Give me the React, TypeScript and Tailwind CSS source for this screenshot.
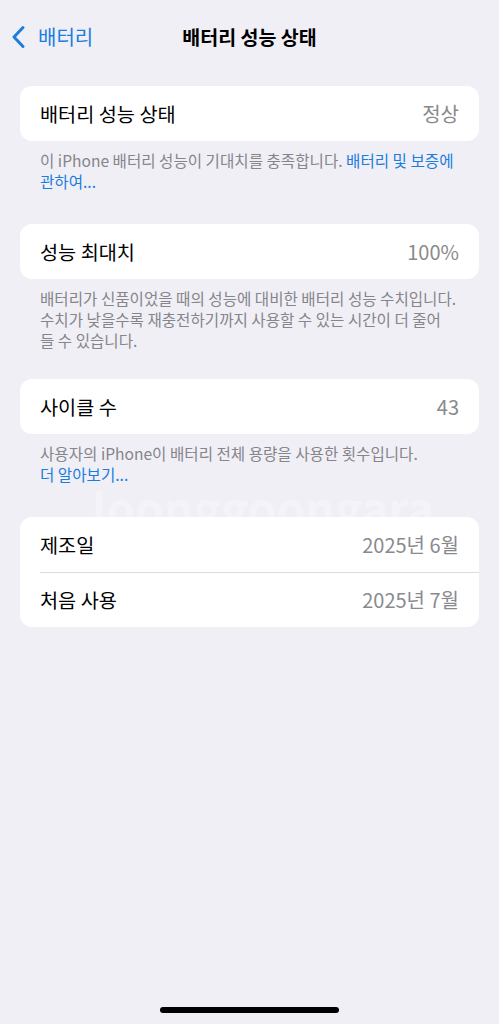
import React from 'react';

const font = { fontFamily: '"Noto Sans CJK KR", "Noto Sans", sans-serif' };

type Row = { label: string; value: string };

const Card: React.FC<{ rows: Row[] }> = ({ rows }) => (
    <div className="relative z-10 mx-5 rounded-xl bg-white">
        {rows.map((r, i) => (
            <div key={r.label} className="flex">
                <div className={`ml-5 flex h-[55px] flex-1 items-center justify-between pr-5 ${i > 0 ? 'border-t border-[#dcdce0]' : ''}`}>
                    <span className="text-[19.7px] text-black">{r.label}</span>
                    <span className="text-[20px] text-[#8a8a8e]">{r.value}</span>
                </div>
            </div>
        ))}
    </div>
);

const Footer: React.FC<{ children: React.ReactNode }> = ({ children }) => (
    <p className="relative z-10 ml-10 mt-[9px] whitespace-nowrap text-[15.6px] leading-[21px] text-[#85858a]">{children}</p>
);

export default function App() {
    return (
        <div style={font} className="relative flex h-[1024px] w-full flex-col overflow-hidden bg-[#f0eff6]">
            {/* faint watermark, sits behind the cards */}
            <div className="pointer-events-none absolute left-[92px] top-[484px] z-0 text-[46px] font-semibold leading-none text-white/30">
                loonggoongara
            </div>

            {/* nav bar */}
            <div className="relative flex h-[74px] items-center justify-center">
                <div className="absolute left-[11px] top-[25px] flex items-center gap-[12px] text-[#1b7ddc]">
                    <svg width="15" height="24" viewBox="0 0 15 24" fill="none">
                        <path d="M12 2.5 L3 12 L12 21.5" stroke="currentColor" strokeWidth="3" strokeLinecap="round" strokeLinejoin="round" />
                    </svg>
                    <span className="text-[20px] leading-none">배터리</span>
                </div>
                <h1 className="text-[19.5px] font-semibold text-black">배터리 성능 상태</h1>
            </div>

            <div className="mt-3">
                <Card rows={[{ label: '배터리 성능 상태', value: '정상' }]} />
                <Footer>
                    이 iPhone 배터리 성능이 기대치를 충족합니다. <span className="text-[#1b7ddc]">배터리 및 보증에</span>
                    <br />
                    <span className="text-[#1b7ddc]">관하여...</span>
                </Footer>
            </div>

            <div className="mt-[32px]">
                <Card rows={[{ label: '성능 최대치', value: '100%' }]} />
                <Footer>
                    배터리가 신품이었을 때의 성능에 대비한 배터리 성능 수치입니다.
                    <br />
                    수치가 낮을수록 재충전하기까지 사용할 수 있는 시간이 더 줄어
                    <br />들 수 있습니다.
                </Footer>
            </div>

            <div className="mt-[28px]">
                <Card rows={[{ label: '사이클 수', value: '43' }]} />
                <Footer>
                    사용자의 iPhone이 배터리 전체 용량을 사용한 횟수입니다.
                    <br />
                    <span className="text-[#1b7ddc]">더 알아보기...</span>
                </Footer>
            </div>

            <div className="mt-[32px]">
                <Card
                    rows={[
                        { label: '제조일', value: '2025년 6월' },
                        { label: '처음 사용', value: '2025년 7월' },
                    ]}
                />
            </div>

            <div className="mt-auto mb-[11px] flex justify-center">
                <div className="h-[6px] w-[179px] rounded-full bg-black" />
            </div>
        </div>
    );
}
